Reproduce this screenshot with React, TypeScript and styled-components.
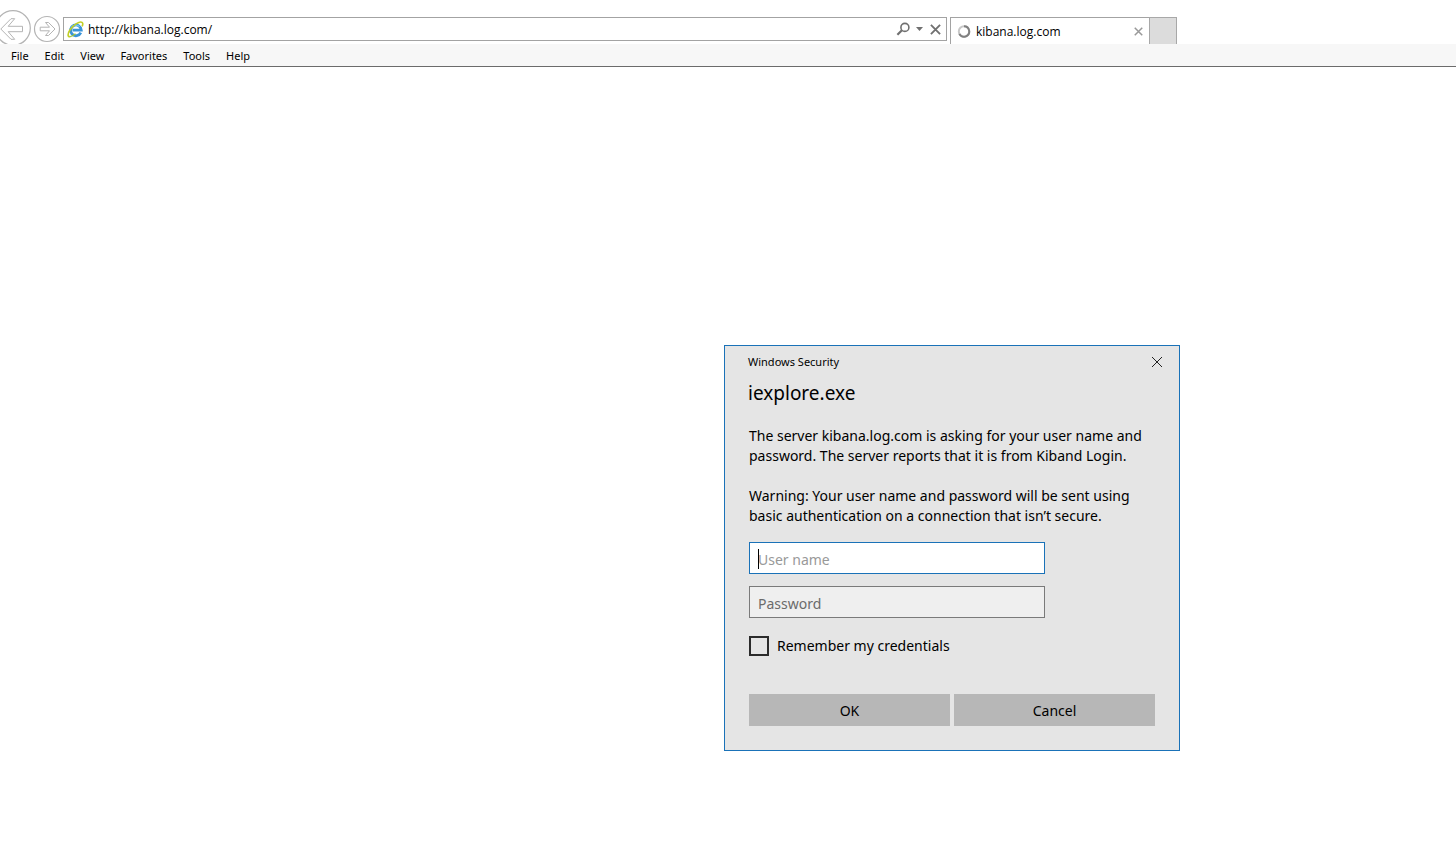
import React, { useState } from "react";
import styled, { createGlobalStyle } from "styled-components";

const GlobalStyle = createGlobalStyle`
  *, *::before, *::after { box-sizing: border-box; }
  body {
    margin: 0;
    background: #fff;
    color: #000;
    font-family: "Open Sans", "Noto Sans", sans-serif;
    font-size: 12px;
  }
  button, input { font: inherit; color: inherit; }
`;

const Browser = styled.div`
  position: relative;
  min-height: 100vh;
  overflow: hidden;
`;

const NavBar = styled.header`
  display: flex;
  align-items: flex-start;
  height: 44px;
  padding-top: 10px;
`;

const NavButton = styled.button<{ $width: number }>`
  flex: none;
  width: ${(p) => p.$width}px;
  height: 34px;
  padding: 0;
  border: 0;
  background: none;
  svg { display: block; }
`;

const AddressBar = styled.form`
  flex: 1;
  display: flex;
  align-items: center;
  height: 24px;
  margin: 7px 3px 0 0;
  padding: 0 3px;
  border: 1px solid #a3a3a3;
  background: #fff;
`;

const AddressInput = styled.input`
  flex: 1;
  min-width: 0;
  height: 22px;
  margin-left: 4px;
  padding: 0;
  border: 0;
  outline: 0;
  background: none;
`;

const IconButton = styled.button<{ $width: number }>`
  display: flex;
  align-items: center;
  justify-content: center;
  width: ${(p) => p.$width}px;
  height: 20px;
  padding: 0;
  border: 0;
  background: none;
`;

const TabStrip = styled.div`
  flex: 0 0 506px;
  display: flex;
  height: 27px;
  margin-top: 7px;
`;

const Tab = styled.div`
  display: flex;
  align-items: center;
  width: 199px;
  padding: 1px 0 0 6px;
  border: 1px solid #a3a3a3;
  border-width: 1px 0 0 1px;
`;

const TabTitle = styled.span`
  flex: 1;
  margin-left: 5px;
`;

const NewTab = styled.button`
  width: 28px;
  padding: 0;
  border: 1px solid #a8a8a8;
  border-bottom: 0;
  background: #dcdcdc;
`;

const MenuBar = styled.nav`
  display: flex;
  gap: 16px;
  height: 23px;
  padding: 0 11px;
  border-bottom: 1px solid #6b6b6b;
  background: #f7f7f7;
  font-family: "Noto Sans", "Open Sans", sans-serif;
  font-size: 11px;
`;

const MenuItem = styled.button`
  padding: 2px 0 0;
  border: 0;
  background: none;
  line-height: 20px;
`;

const Dialog = styled.section`
  position: absolute;
  top: 345px;
  left: calc(50% - 4px);
  width: 456px;
  padding: 8px 24px 24px;
  border: 1px solid #1a72b8;
  background: #e5e5e5;
  font-family: "Noto Sans", "Open Sans", sans-serif;
  font-size: 14px;
  line-height: 20px;
`;

const TitleBar = styled.div`
  display: flex;
  align-items: center;
  justify-content: space-between;
  height: 16px;
  margin: 0 -8px 0 -1px;
  font-size: 11px;
`;

const Heading = styled.h1`
  margin: 11px 0 21px -1px;
  font-size: 19px;
  font-weight: 400;
  line-height: 24px;
`;

const Message = styled.p`
  margin: 0 0 20px;
  &:last-of-type { margin-bottom: 16px; }
`;

const Field = styled.div`
  position: relative;
  width: 296px;
  margin-bottom: 12px;
`;

const TextBox = styled.input<{ $active?: boolean }>`
  display: block;
  width: 100%;
  height: 32px;
  padding: 2px 8px 0;
  border: 1px solid ${(p) => (p.$active ? "#1a72b8" : "#7a7a7a")};
  border-radius: 0;
  outline: 0;
  background: ${(p) => (p.$active ? "#fff" : "#efefef")};
  &::placeholder {
    color: ${(p) => (p.$active ? "#999" : "#6b6b6b")};
    opacity: 1;
  }
`;

const Caret = styled.span`
  position: absolute;
  top: 7px;
  left: 9px;
  width: 1px;
  height: 20px;
  background: #000;
`;

const Remember = styled.label`
  display: flex;
  align-items: center;
  gap: 8px;
  margin: 18px 0 38px;
`;

const CheckBox = styled.input`
  appearance: none;
  width: 20px;
  height: 20px;
  margin: 0;
  border: 2px solid #2b2b2b;
  &:checked { background: #1a72b8; }
`;

const Actions = styled.div`
  display: flex;
  gap: 4px;
`;

const ActionButton = styled.button`
  flex: 1;
  height: 32px;
  padding: 2px 0 0;
  border: 0;
  background: #b7b7b7;
`;

const BackIcon = () => (
  <svg width="31" height="34" viewBox="0 0 31 34" fill="none" stroke="#b4b4b4">
    <circle cx="13" cy="18" r="17.3" strokeWidth="1.2" />
    <path d="M0.8 19L11 8.7H14.7L8.2 16.3H22.5V21.7H8.2L14.7 29.3H11Z" strokeLinejoin="round" />
  </svg>
);

const ForwardIcon = () => (
  <svg width="32" height="34" viewBox="0 0 32 34" fill="none" stroke="#b4b4b4">
    <circle cx="16" cy="19" r="12.5" strokeWidth="1.2" />
    <path d="M24 19L17.5 12.5H14.5L18.5 17.2H9.2V20.8H18.5L14.5 25.5H17.5Z" strokeLinejoin="round" />
  </svg>
);

const ExplorerIcon = () => (
  <svg width="17" height="17" viewBox="0 0 17 17" fill="none">
    <path d="M13.8 11.6A5.4 5.4 0 1 1 14.3 9.2H5.5" stroke="#3a94d8" strokeWidth="2.8" />
    <path d="M4 7.2A5.4 5.4 0 0 1 12.6 5.6" stroke="#7ccbf0" strokeWidth="1.2" />
    <path d="M3.1 15.6C.4 16.2.4 12.8 3.1 8.8 6.5 3.8 12.7-.2 15 1.4c1.2.8.8 2.5.1 3.9" stroke="#c2cf24" strokeWidth="1.6" />
    <path d="M3.1 15.6c1.8-.1 3.6-1.2 5.4-2.8" stroke="#9cc53a" strokeWidth="1.3" />
  </svg>
);

const SearchIcon = () => (
  <svg width="14" height="14" viewBox="0 0 14 14" fill="none" stroke="#707070">
    <circle cx="8.9" cy="5.4" r="4" strokeWidth="1.6" />
    <path d="M5.9 8.3L1.4 12.8" strokeWidth="2.2" />
  </svg>
);

const CrossIcon = ({ size, color, weight }: { size: number; color: string; weight: number }) => (
  <svg width={size} height={size} viewBox="0 0 12 12" fill="none" stroke={color} strokeWidth={weight}>
    <path d="M1 1L11 11M11 1L1 11" />
  </svg>
);

const Spinner = () => (
  <svg width="14" height="14" viewBox="0 0 14 14" fill="none" strokeWidth="2">
    <circle cx="7" cy="6.5" r="5.2" stroke="#c8c8c8" />
    <path d="M7 1.3A5.2 5.2 0 1 1 2.4 8.9" stroke="#808080" />
  </svg>
);

const menus = ["File", "Edit", "View", "Favorites", "Tools", "Help"];

export default function App() {
  const [url, setUrl] = useState("http://kibana.log.com/");

  return (
    <Browser>
      <GlobalStyle />
      <NavBar>
        <NavButton $width={31} aria-label="Back"><BackIcon /></NavButton>
        <NavButton $width={32} aria-label="Forward"><ForwardIcon /></NavButton>
        <AddressBar onSubmit={(e) => e.preventDefault()}>
          <ExplorerIcon />
          <AddressInput aria-label="Address" value={url} onChange={(e) => setUrl(e.target.value)} />
          <IconButton type="submit" $width={16} aria-label="Search"><SearchIcon /></IconButton>
          <IconButton type="button" $width={16} aria-label="Show address history">
            <svg width="7" height="4" viewBox="0 0 7 4" fill="#707070"><path d="M0 0H7L3.5 4Z" /></svg>
          </IconButton>
          <IconButton type="button" $width={16} aria-label="Stop">
            <CrossIcon size={11} color="#707070" weight={2} />
          </IconButton>
        </AddressBar>
        <TabStrip>
          <Tab>
            <Spinner />
            <TabTitle>kibana.log.com</TabTitle>
            <IconButton $width={21} aria-label="Close tab">
              <CrossIcon size={9} color="#999" weight={2} />
            </IconButton>
          </Tab>
          <NewTab aria-label="New tab" />
        </TabStrip>
      </NavBar>
      <MenuBar>
        {menus.map((name) => <MenuItem key={name}>{name}</MenuItem>)}
      </MenuBar>
      <Dialog role="dialog" aria-labelledby="dialog-title">
        <TitleBar>
          <span>Windows Security</span>
          <IconButton $width={12} aria-label="Close">
            <CrossIcon size={12} color="#222" weight={1} />
          </IconButton>
        </TitleBar>
        <Heading id="dialog-title">iexplore.exe</Heading>
        <Message>
          The server kibana.log.com is asking for your user name and<br />
          password. The server reports that it is from Kiband Login.
        </Message>
        <Message>
          Warning: Your user name and password will be sent using<br />
          basic authentication on a connection that isn’t secure.
        </Message>
        <form onSubmit={(e) => e.preventDefault()}>
          <Field>
            <TextBox $active type="text" aria-label="User name" placeholder="User name" />
            <Caret />
          </Field>
          <Field>
            <TextBox type="password" aria-label="Password" placeholder="Password" />
          </Field>
          <Remember>
            <CheckBox type="checkbox" />
            Remember my credentials
          </Remember>
          <Actions>
            <ActionButton type="submit">OK</ActionButton>
            <ActionButton type="button">Cancel</ActionButton>
          </Actions>
        </form>
      </Dialog>
    </Browser>
  );
}
